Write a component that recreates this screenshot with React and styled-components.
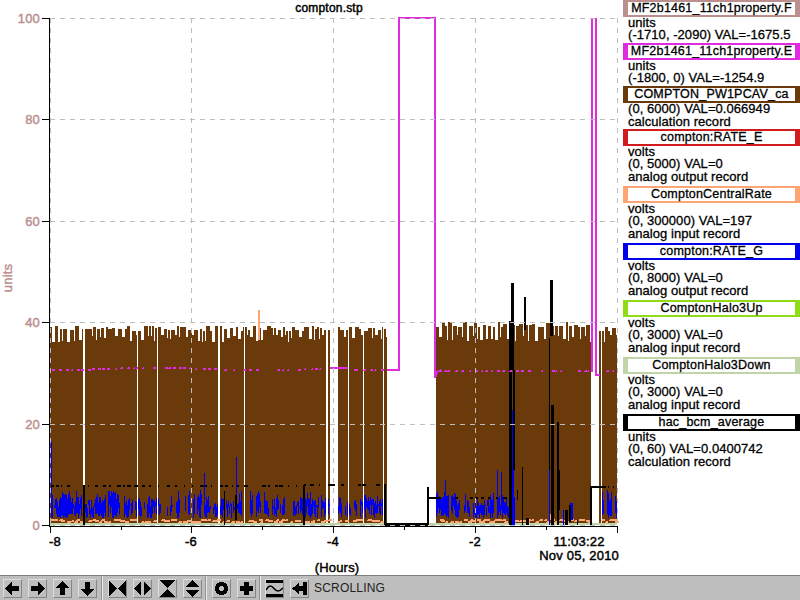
import React from 'react';
import styled, { createGlobalStyle } from 'styled-components';

const GlobalStyle = createGlobalStyle`
    html, body {
        margin: 0;
        padding: 0;
        background: #fff;
    }
`;

const Page = styled.div`
    width: 800px;
    height: 600px;
    display: flex;
    flex-direction: column;
    overflow: hidden;
    font-family: "Liberation Sans", Arial, sans-serif;
    background: #fff;
`;

const Main = styled.div`
    display: flex;
    flex: 1;
    min-height: 0;
`;

const Plot = styled.svg`
    display: block;
    width: 623px;
    height: 575px;
    flex: none;
`;

const Legend = styled.div`
    flex: 1;
    display: flex;
    flex-direction: column;
`;

const Item = styled.div`
    height: ${props => props.$tall ? 57 : 43}px;
    flex: none;
`;

const Label = styled.div`
    height: 17px;
    box-sizing: border-box;
    border: solid ${props => props.$color};
    border-width: 2px 5px;
    font-size: 12.5px;
    letter-spacing: 0.2px;
    line-height: 13px;
    text-align: center;
    white-space: nowrap;
    color: #000;
    -webkit-text-stroke: 0.3px #000;
`;

const Detail = styled.div`
    padding-left: 5px;
    font-size: 13px;
    letter-spacing: 0.05px;
    white-space: nowrap;
    color: #000;
    -webkit-text-stroke: 0.3px #000;
    height: ${props => props.$h}px;
    line-height: ${props => props.$h}px;
`;

const Toolbar = styled.div`
    height: 25px;
    flex: none;
    box-sizing: border-box;
    display: flex;
    align-items: center;
    background: #bebebe;
    border-top: 1px solid #7e7e7e;
`;

const Group = styled.div`
    display: flex;
    align-items: center;
    gap: 6px;
    height: 100%;
    padding: 0 ${props => props.$right}px 0 ${props => props.$left}px;
    border-right: ${props => props.$sep ? '2px groove #e8e8e8' : 'none'};
    box-sizing: content-box;
`;

const Btn = styled.div`
    width: 19px;
    height: 19px;
    box-sizing: border-box;
    border: 1px solid;
    border-color: #dedede #858585 #858585 #dedede;
    display: flex;
    align-items: center;
    justify-content: center;
`;

const Status = styled.span`
    margin-left: 5px;
    font-size: 12px;
    letter-spacing: 0.2px;
    color: #222;
`;

const Glyph = styled.svg`
    display: block;
    width: 17px;
    height: 17px;
    flex: none;
`;

const AxisText = styled.text`
    font-family: "Liberation Sans", Arial, sans-serif;
    font-size: ${props => props.$size || 13}px;
    letter-spacing: 0.2px;
    fill: ${props => props.$color || '#000'};
    stroke: ${props => props.$color || '#000'};
    stroke-width: 0.45px;
`;

const BROWN = '#6a3a0a';
const MAGENTA = '#e02be0';
const PEACH = '#ffa574';
const BLUE = '#0000ee';
const PALE = '#c0d4a8';
const GRID = '#bebebe';
const ROSY = '#bc8f8f';

const yPos = v => 525 - v * 5.07;
const xMajor = [50, 191, 333, 475, 617];
const xMinor = [121, 262, 404, 546];
const yMajor = [100, 80, 60, 40, 20, 0];

// fixed seed so the noise comes out the same every load
let seed = 20101105;
const rnd = () => {
    seed = (seed + 0x6d2b79f5) | 0;
    let t = Math.imul(seed ^ (seed >>> 15), 1 | seed);
    t = (t + Math.imul(t ^ (t >>> 7), 61 | t)) ^ t;
    return ((t ^ (t >>> 14)) >>> 0) / 4294967296;
};
const between = (a, b) => a + Math.floor(rnd() * (b - a + 1));
const bar = (x, y0, y1, w = 1) => `M${x} ${y0}h${w}V${y1}h-${w}z`;

const segments = [
    [50, 83], [85, 137], [138, 157], [158, 218], [220, 244], [245, 326], [328, 330],
    [338, 348], [349, 363], [364, 383], [384, 387], [436, 591], [599, 601], [602, 617],
];

// comb of teeth along the top of the brown trace
const brownPath = () => {
    let d = '';
    segments.forEach(([a, b]) => {
        const high = a >= 436 && a < 592;
        let x = a;
        while (x < b) {
            const w = Math.min(between(2, 4), b - x);
            d += bar(x, high ? between(322, 327) : between(326, 331), 525, w);
            x += w;
            if (x < b && rnd() < 0.75) {
                const n = Math.min(between(1, 3), b - x);
                d += bar(x, between(335, 342), 525, n);
                x += n;
            }
        }
    });
    return d;
};

const inBrown = x => segments.some(([a, b]) => x >= a && x < b);

// thin jagged columns, a slow base with fast noise on top
const bluePath = () => {
    let d = '';
    const heavy = [[51, 384], [436, 510], [598, 617]];
    heavy.forEach(([a, b]) => {
        let base = 498;
        for (let x = a; x < b; x++) {
            if (!inBrown(x)) continue;
            base = Math.max(493, Math.min(503, base + between(-2, 2)));
            if (rnd() < 0.16) {
                x += between(0, 2);
                continue;
            }
            const top = base + between(-5, 6);
            d += bar(x, top, rnd() < 0.75 ? between(513, 518) : between(505, 512));
        }
    });
    d += bar(51, 441, 500) + bar(236, 457, 500) + bar(204, 473, 500);
    d += bar(501, 472, 510) + bar(445, 480, 500) + bar(497, 470, 505);
    d += bar(512, 410, 525, 2) + bar(509, 468, 525, 3) + bar(549, 461, 525);
    d += bar(513, 497, 525, 2) + bar(570, 503, 520, 3) + bar(563, 510, 525);
    return d;
};

const peachPath = () => {
    let d = '';
    for (let x = 51; x < 617; x += between(2, 5)) {
        if (!inBrown(x)) continue;
        d += `M${x} ${between(519, 521)}h${between(2, 4)}v2h-4z`;
    }
    d += bar(258, 310, 340, 2) + bar(549, 438, 455, 1) + bar(549, 514, 520, 2);
    return d;
};

const blackPath = () => {
    let d = '';
    const dashes = (a, b, y) => {
        for (let x = a; x < b; x += between(4, 9)) {
            if (rnd() < 0.8) d += bar(x, y, y + 2, between(1, 4));
        }
    };
    dashes(51, 218, 485);
    dashes(220, 300, 485);
    dashes(304, 384, 484);
    dashes(436, 506, 497);
    dashes(603, 614, 486);
    d += bar(83, 485, 525, 2) + bar(224, 491, 525) + bar(235, 495, 520, 2) + bar(303, 485, 525, 2);
    d += bar(384, 484, 525, 2) + `M384 523h44v3h-44z` + bar(427, 487, 525, 2);
    d += `M429 497h8v2h-8z` + bar(590, 486, 525, 2) + `M590 486h13v2h-13z`;
    d += bar(509, 321, 525, 3) + bar(511, 283, 370, 3) + bar(513, 370, 470, 2);
    d += bar(524, 297, 330, 2) + bar(522, 467, 525, 1) + bar(550, 280, 336, 3) + bar(549, 338, 470, 1);
    d += bar(551, 405, 525, 3) + bar(557, 422, 525, 2) + bar(558, 470, 510, 2) + bar(565, 510, 525, 3);
    d += bar(569, 505, 522, 2) + bar(517, 490, 500) + bar(526, 518, 525, 3) + bar(577, 520, 525);
    return d;
};

const magentaDots = () => {
    let d = '';
    const run = (a, b, base, slope) => {
        for (let x = a; x < b; x += between(3, 7)) {
            if (rnd() < 0.72) d += `M${x} ${base + Math.round(Math.sin(x * slope) * 1.2)}h${between(1, 3)}v2h-3z`;
        }
    };
    run(52, 326, 368, 0.03);
    run(440, 591, 370, 0);
    run(598, 617, 370, 0);
    d += 'M330 367h18v2h-18z';
    run(350, 387, 369, 0);
    return d;
};

const traces = {
    brown: brownPath(),
    blue: bluePath(),
    peach: peachPath(),
    black: blackPath(),
    magenta: magentaDots(),
};

const Chart = () => (
    <Plot viewBox="0 0 623 575" shapeRendering="crispEdges">
        <AxisText x="329" y="12" textAnchor="middle" $size={12}>compton.stp</AxisText>
        <path d={traces.brown} fill={BROWN} />
        <path d={`M50 523h567v2h-567z`} fill={PALE} />
        <path d={traces.peach} fill={PEACH} />
        <path d={traces.blue} fill={BLUE} />
        <path d={traces.black} fill="#000" />
        <path d={traces.magenta} fill={MAGENTA} />
        <path
            d="M387 370H399V18H435V378 M435 378L437 372L441 370 M592 372V18 M596 18V375H600"
            fill="none"
            stroke={MAGENTA}
            strokeWidth="2"
        />
        {/* grid sits on top of the traces */}
        {xMajor.map(x => (
            <line key={x} x1={x + 0.5} x2={x + 0.5} y1="18" y2="525" stroke={GRID} strokeDasharray="5 5" />
        ))}
        {yMajor.map(v => (
            <line key={v} x1="50" x2="618" y1={Math.round(yPos(v)) + 0.5} y2={Math.round(yPos(v)) + 0.5} stroke={GRID} strokeDasharray="5 5" />
        ))}
        <line x1="49.5" x2="49.5" y1="18" y2="526" stroke="#000" />
        <line x1="49" x2="618" y1="526.5" y2="526.5" stroke="#000" />
        {yMajor.map(v => (
            <React.Fragment key={v}>
                <line x1="42" x2="50" y1={Math.round(yPos(v)) + 0.5} y2={Math.round(yPos(v)) + 0.5} stroke="#000" />
                <AxisText x="40" y={Math.round(yPos(v)) + 5} textAnchor="end" $color={ROSY}>{v}</AxisText>
            </React.Fragment>
        ))}
        {xMajor.map(x => <line key={x} x1={x + 0.5} x2={x + 0.5} y1="526" y2="533" stroke="#000" />)}
        {xMinor.map(x => <line key={x} x1={x + 0.5} x2={x + 0.5} y1="526" y2="530" stroke="#000" />)}
        {[-8, -6, -4, -2].map((v, i) => (
            <AxisText key={v} x={i === 0 ? 55 : xMajor[i]} y="546" textAnchor="middle">{v}</AxisText>
        ))}
        <AxisText x="579" y="546" textAnchor="middle">11:03:22</AxisText>
        <AxisText x="619" y="560" textAnchor="end">Nov 05, 2010</AxisText>
        <AxisText x="337" y="572" textAnchor="middle">(Hours)</AxisText>
        <AxisText x="12" y="278" textAnchor="middle" $color={ROSY} transform="rotate(-90 12 278)">units</AxisText>
    </Plot>
);

const pens = [
    { label: 'MF2b1461_11ch1property.F', color: ROSY, unit: 'units', range: '(-1710, -2090) VAL=-1675.5' },
    { label: 'MF2b1461_11ch1property.E', color: MAGENTA, unit: 'units', range: '(-1800, 0) VAL=-1254.9' },
    { label: 'COMPTON_PW1PCAV_ca', color: BROWN, range: '(0, 6000) VAL=0.066949', record: 'calculation record' },
    { label: 'compton:RATE_E', color: '#d01c1c', unit: 'volts', range: '(0, 5000) VAL=0', record: 'analog output record' },
    { label: 'ComptonCentralRate', color: PEACH, unit: 'volts', range: '(0, 300000) VAL=197', record: 'analog input record' },
    { label: 'compton:RATE_G', color: BLUE, unit: 'volts', range: '(0, 8000) VAL=0', record: 'analog output record' },
    { label: 'ComptonHalo3Up', color: '#90dc14', unit: 'volts', range: '(0, 3000) VAL=0', record: 'analog input record' },
    { label: 'ComptonHalo3Down', color: PALE, unit: 'volts', range: '(0, 3000) VAL=0', record: 'analog input record' },
    { label: 'hac_bcm_average', color: '#000', unit: 'units', range: '(0, 60) VAL=0.0400742', record: 'calculation record' },
];

const Icon = ({ d }) => (
    <Glyph viewBox="0 0 17 17" shapeRendering="crispEdges">
        <path d={d} fill="#000" fillRule="evenodd" />
    </Glyph>
);

const icons = {
    left: 'M1 8.5L8 2V6H15V11H8V15z',
    right: 'M16 8.5L9 2V6H2V11H9V15z',
    up: 'M8.5 1L15 8H11V15H6V8H2z',
    down: 'M8.5 16L15 9H11V2H6V9H2z',
    zoomInX: 'M0 0L8 8.5L0 17z M17 0L9 8.5L17 17z',
    zoomOutX: 'M7 1V16L0 8.5z M10 1V16L17 8.5z',
    zoomInY: 'M0 0H17L8.5 8zM0 17H17L8.5 9z',
    zoomOutY: 'M1 7H16L8.5 0zM1 10H16L8.5 17z',
    ring: 'M8.5 2a6.5 6.5 0 1 0 .01 0zM8.5 6a2.5 2.5 0 1 1 -.01 0z',
    plus: 'M6 2H11V6H15V11H11V15H6V11H2V6H6z',
    back: 'M1 8.5L8 3V6H12V2H16V15H12V11H8V14z',
};

const Wave = () => (
    <Glyph viewBox="0 0 17 17">
        <path d="M0 1.5H17M0 15.5H17" stroke="#000" strokeWidth="3" fill="none" />
        <path d="M0 10C3 5 5 5 8 8.5S13 12 17 8" stroke="#000" strokeWidth="1.6" fill="none" />
    </Glyph>
);

const App = () => (
    <Page>
        <GlobalStyle />
        <Main>
            <Chart />
            <Legend>
                {pens.map(pen => (
                    <Item key={pen.label} $tall={pen.unit && pen.record}>
                        <Label $color={pen.color}>{pen.label}</Label>
                        {pen.unit && <Detail $h={12}>{pen.unit}</Detail>}
                        <Detail $h={11}>{pen.range}</Detail>
                        {pen.record && <Detail $h={15}>{pen.record}</Detail>}
                    </Item>
                ))}
            </Legend>
        </Main>
        <Toolbar>
            <Group $left={3} $right={4} $sep>
                <Btn><Icon d={icons.left} /></Btn>
                <Btn><Icon d={icons.right} /></Btn>
                <Btn><Icon d={icons.up} /></Btn>
                <Btn><Icon d={icons.down} /></Btn>
            </Group>
            <Group $left={5} $right={3} $sep>
                <Btn><Icon d={icons.zoomInX} /></Btn>
                <Btn><Icon d={icons.zoomOutX} /></Btn>
                <Btn><Icon d={icons.zoomInY} /></Btn>
                <Btn><Icon d={icons.zoomOutY} /></Btn>
            </Group>
            <Group $left={5} $right={3} $sep>
                <Btn><Icon d={icons.ring} /></Btn>
                <Btn><Icon d={icons.plus} /></Btn>
            </Group>
            <Group $left={4} $right={0}>
                <Btn><Wave /></Btn>
                <Btn><Icon d={icons.back} /></Btn>
            </Group>
            <Status>SCROLLING</Status>
        </Toolbar>
    </Page>
);

export default App;
